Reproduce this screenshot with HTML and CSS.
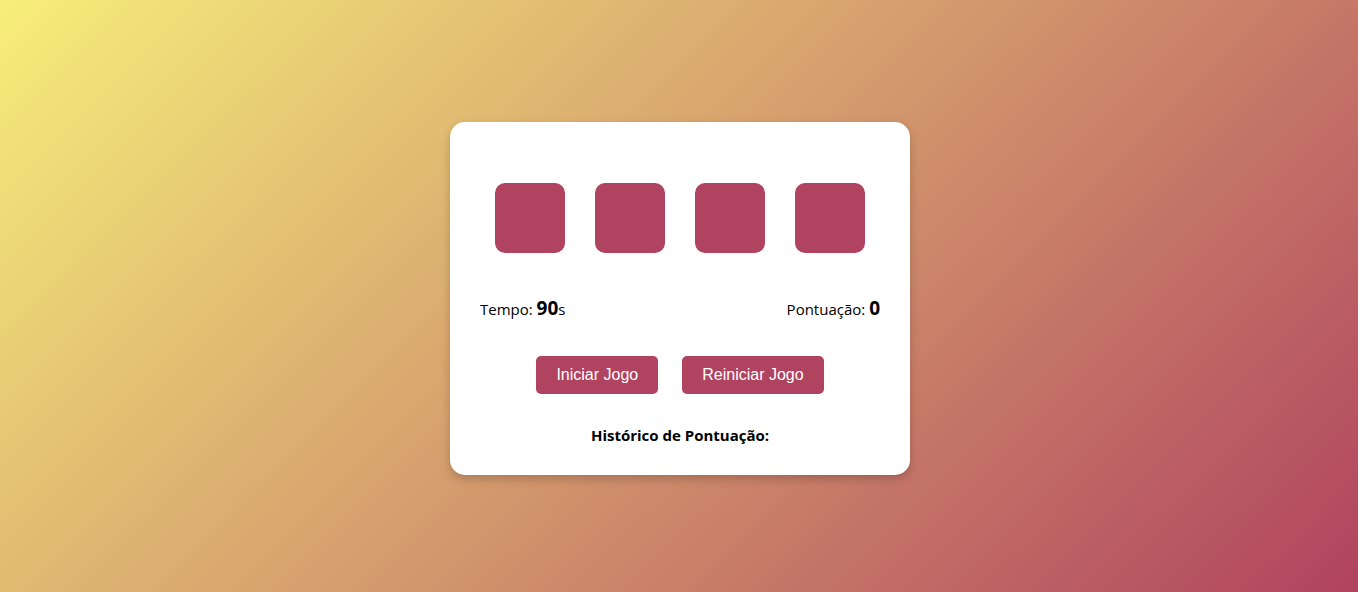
FILE: index.html
```html
<!DOCTYPE html>
<html lang="pt">
<head>
<meta charset="utf-8">
<title>Jogo</title>
<link rel="stylesheet" href="styles.css">
</head>
<body>
<div class="card">
  <div class="board">
    <div class="tile"></div>
    <div class="tile"></div>
    <div class="tile"></div>
    <div class="tile"></div>
  </div>
  <div class="stats">
    <div>Tempo: <strong class="num">90</strong>s</div>
    <div>Pontuação: <strong class="num">0</strong></div>
  </div>
  <div class="actions">
    <button class="btn">Iniciar Jogo</button>
    <button class="btn">Reiniciar Jogo</button>
  </div>
  <h3 class="history">Histórico de Pontuação:</h3>
</div>
</body>
</html>
```
FILE: styles.css
```css
html, body { height: 100%; }
body {
  margin: 0;
  padding-left: 2px;
  box-sizing: border-box;
  font-family: "Open Sans", "Noto Sans", sans-serif;
  background: linear-gradient(135deg, #f6ee7a, #b0435f);
  display: flex;
  align-items: center;
  justify-content: center;
}
.card {
  background: #fff;
  width: 400px;
  padding: 30px;
  border-radius: 15px;
  box-shadow: 0 4px 10px rgba(0,0,0,0.2);
  margin-top: 5px;
}
.board {
  display: flex;
  justify-content: center;
  gap: 30px;
  margin: 31px 0 0;
}
.tile {
  width: 70px;
  height: 70px;
  background: #b04360;
  border-radius: 10px;
}
.stats {
  display: flex;
  justify-content: space-between;
  align-items: baseline;
  margin-top: 42px;
  font-size: 15px;
  color: #000;
}
.num { font-size: 19px; font-weight: 700; }
.actions {
  display: flex;
  justify-content: center;
  gap: 24px;
  margin-top: 35px;
}
.btn {
  font-family: "Liberation Sans", Arial, sans-serif;
  font-size: 16px;
  color: #fff;
  background: #b04360;
  border: none;
  border-radius: 5px;
  padding: 0 20px;
  height: 38px;
}
.history {
  text-align: center;
  font-size: 15px;
  font-weight: 700;
  margin: 31px 0 0;
}
```
